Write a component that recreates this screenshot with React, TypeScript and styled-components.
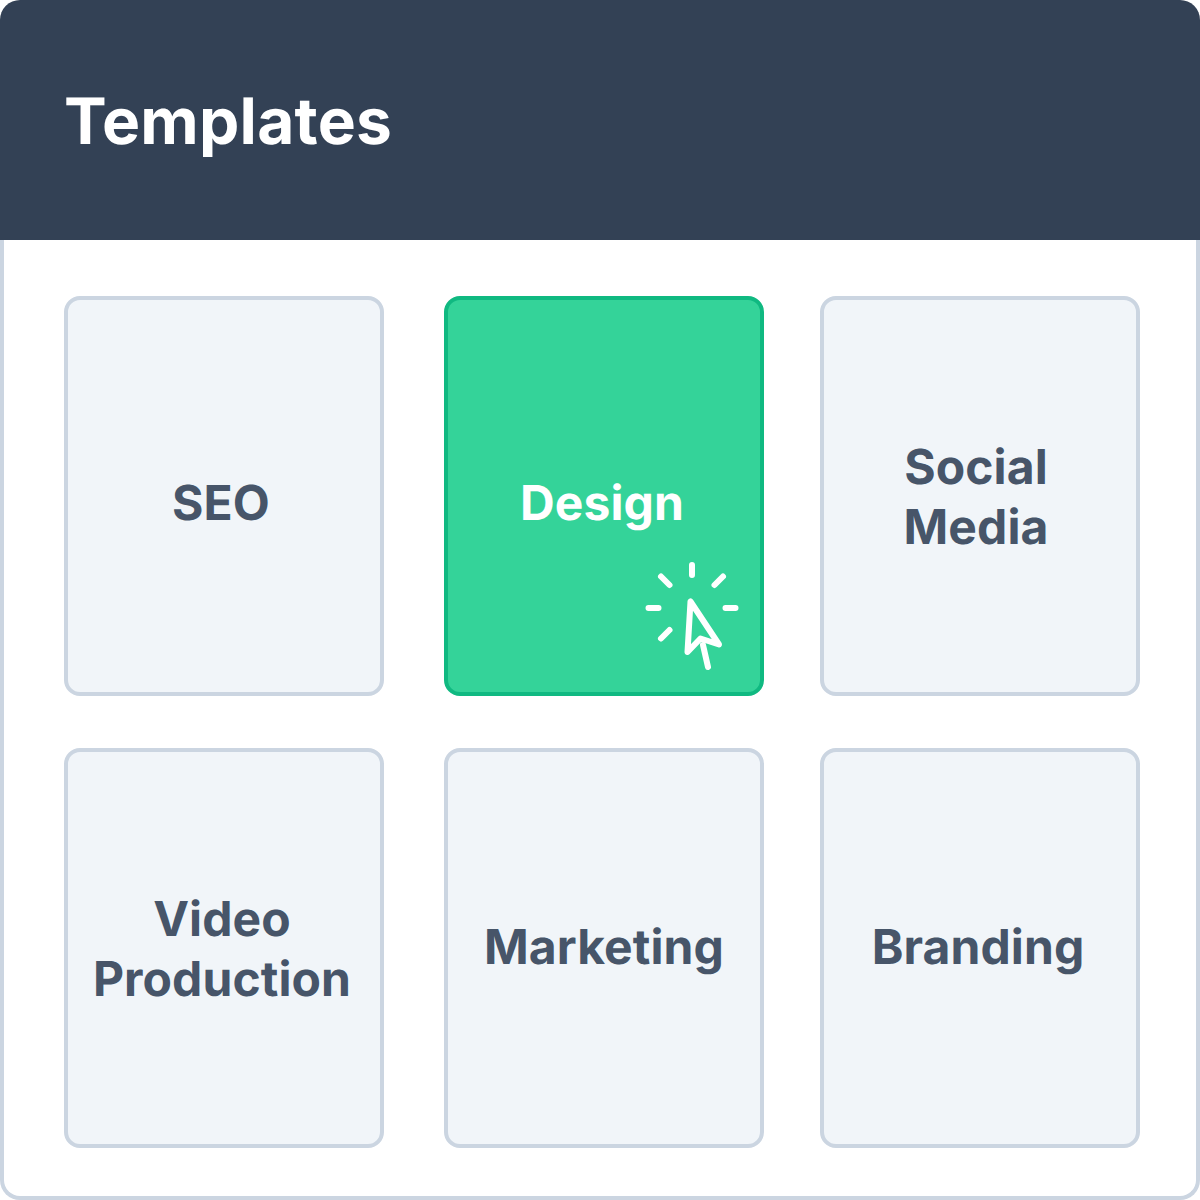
import React from "react";
import styled, { createGlobalStyle } from "styled-components";

const Global = createGlobalStyle`
  html, body { margin: 0; padding: 0; background: #fff; }
  body { font-family: Inter, "Liberation Sans", sans-serif; text-rendering: geometricPrecision; }
`;

const Panel = styled.div`
  width: 1200px;
  height: 1200px;
  background: #fff;
`;

const Header = styled.header`
  height: 240px;
  box-sizing: border-box;
  padding: 4px 0 0 64px;
  background: #334155;
  border-radius: 20px 20px 0 0;
  display: flex;
  align-items: center;
`;

const Title = styled.h1`
  margin: 0;
  color: #fff;
  font-size: 64px;
  font-weight: 700;
  line-height: 1;
  letter-spacing: 0.25px;
`;

const Body = styled.main`
  height: 960px;
  box-sizing: border-box;
  border: 4px solid #cbd5e1;
  border-top: none;
  border-radius: 0 0 20px 20px;
`;

const Grid = styled.div`
  display: grid;
  grid-template-columns: 380px 376px 320px;
  grid-template-rows: 400px 400px;
  row-gap: 52px;
  padding: 56px 0 0 60px;
`;

const Card = styled.div<{ $active?: boolean; $left?: number; $down?: number }>`
  position: relative;
  box-sizing: border-box;
  width: 320px;
  height: 400px;
  padding: ${(p) => Math.max(p.$down ?? 0, 0) * 2}px ${(p) => (p.$left ?? 0) * 2}px
    ${(p) => Math.max(-(p.$down ?? 0), 0) * 2}px 0;
  border: 4px solid ${(p) => (p.$active ? "#10b981" : "#cbd5e1")};
  border-radius: 16px;
  background: ${(p) => (p.$active ? "#34d399" : "#f1f5f9")};
  color: ${(p) => (p.$active ? "#fff" : "#475569")};
  display: flex;
  align-items: center;
  justify-content: center;
  text-align: center;
  font-size: 48px;
  font-weight: 700;
  line-height: 60px;
  letter-spacing: 0.1px;
`;

const Cursor = styled.svg`
  position: absolute;
  left: 192px;
  top: 256px;
  width: 105px;
  height: 119px;
  fill: none;
  stroke: #fff;
  stroke-width: 6;
  stroke-linecap: round;
  stroke-linejoin: round;
`;

export default function App() {
  return (
    <>
      <Global />
      <Panel>
        <Header>
          <Title>Templates</Title>
        </Header>
        <Body>
          <Grid>
            <Card $left={3} $down={7}>SEO</Card>
            <Card $active $left={2} $down={7}>
              Design
              <Cursor viewBox="640 556 105 119">
                <path d="M692 565V575M648.5 608H658.5M725.5 608H735.5M661 576.5L669.5 585M723 576.5L714.5 585M669.5 630L661 638.5" />
                <path d="M690.5 601.5L687.5 652L700.5 638.5L719 644.5ZM703 645L708 667" />
              </Cursor>
            </Card>
            <Card $left={4} $down={1}>
              Social
              <br />
              Media
            </Card>
            <Card $left={2} $down={1}>
              Video
              <br />
              Production
            </Card>
            <Card $down={-1}>Marketing</Card>
            <Card $left={2} $down={-1}>Branding</Card>
          </Grid>
        </Body>
      </Panel>
    </>
  );
}
